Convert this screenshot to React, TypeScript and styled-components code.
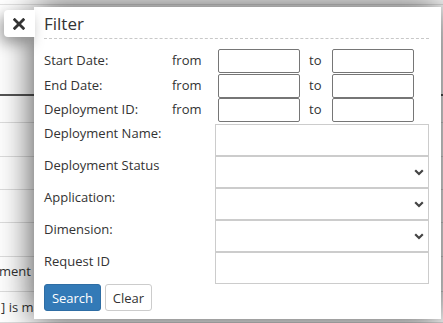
import React from "react";
import styled, { createGlobalStyle } from "styled-components";

const Global = createGlobalStyle`
  html, body { margin: 0; padding: 0; background: #fff; }
  body { font-family: "Open Sans", "Liberation Sans", sans-serif; color: #333; }
  * { box-sizing: border-box; }
`;

const Stage = styled.div`
  position: relative;
  width: 443px;
  height: 323px;
  overflow: hidden;
  background: #fff;
`;

/* ---------- background page ---------- */
const BgPage = styled.div`
  display: flex;
  flex-direction: column;
  width: 443px;
  font-size: 13px;
  color: #333;
`;

const BgTop = styled.div`
  height: 7px;
  border-bottom: 1px solid #e3e3e3;
  margin-top: -2px;
`;

const BgHeader = styled.div`
  height: 91px;
  border-bottom: 2px solid #555;
`;

const BgRow = styled.div<{ $h: number }>`
  height: ${(p) => p.$h}px;
  border-bottom: 1px solid #ddd;
  display: flex;
  align-items: center;
  white-space: nowrap;
`;

const BgText = styled.span<{ $shift: number }>`
  margin-left: ${(p) => p.$shift}px;
  margin-top: ${(p) => (p.$shift < 0 ? -6 : 0)}px;
`;

/* ---------- overlay panel ---------- */
const Panel = styled.div`
  position: absolute;
  left: 34px;
  top: 7px;
  width: 407px;
  height: 312px;
  background: #fff;
  box-shadow: 0 0 34px rgba(0, 0, 0, 0.75);
  padding: 0 12px 0 10px;
  display: flex;
  flex-direction: column;
`;

const CloseTab = styled.button`
  position: absolute;
  left: 4px;
  top: 10px;
  width: 31px;
  height: 27px;
  border: 0;
  padding: 0 1px 0 0;
  background: #fff;
  border-radius: 4px 0 0 4px;
  box-shadow: -4px 6px 14px rgba(0, 0, 0, 0.35);
  display: flex;
  align-items: center;
  justify-content: center;
  cursor: pointer;
`;

const Title = styled.div`
  height: 32px;
  display: flex;
  align-items: center;
  font-size: 17px;
  color: #333;
  border-bottom: 1px dashed #c8c8c8;
  padding-top: 1px;
`;

const RangeGrid = styled.div`
  display: grid;
  grid-template-columns: 128px 46px 82px 32px 83px;
  grid-auto-rows: 24.5px;
  margin-top: 10px;
  font-size: 13px;
  align-items: center;
`;

const Label = styled.span`
  font-size: 13px;
  color: #333;
  line-height: 18px;
  white-space: nowrap;
  margin-top: -2px;
`;

const Small = styled.span<{ $pl?: number }>`
  font-size: 13px;
  color: #333;
  padding-left: ${(p) => p.$pl ?? 0}px;
  margin-top: -2px;
`;

const RangeInput = styled.input`
  width: 82px;
  height: 24px;
  border: 1px solid #767676;
  border-radius: 2px;
  padding: 0 3px;
  font: inherit;
  align-self: start;
`;

const FieldGrid = styled.div`
  display: grid;
  grid-template-columns: 171px 214px;
  grid-auto-rows: 32px;
  margin-top: 1.5px;
`;

const FieldLabel = styled.span`
  font-size: 13px;
  color: #333;
  line-height: 18px;
  white-space: nowrap;
`;

const TextBox = styled.input`
  width: 214px;
  height: 32px;
  border: 1px solid #ccc;
  border-radius: 0;
  padding: 0 6px;
  font: inherit;
`;

const SelectBox = styled.div`
  width: 214px;
  height: 32px;
  border: 1px solid #ccc;
  display: flex;
  align-items: center;
  justify-content: flex-end;
  padding-right: 4px;
  padding-top: 1px;
`;

const Buttons = styled.div`
  display: flex;
  gap: 4px;
  margin-top: 0;
`;

const Btn = styled.button<{ $primary?: boolean }>`
  height: 27px;
  padding: 0 6px;
  font-family: "Open Sans", "Liberation Sans", sans-serif;
  font-size: 13px;
  border-radius: 3px;
  border: 1px solid ${(p) => (p.$primary ? "#2e6da4" : "#ccc")};
  background: ${(p) => (p.$primary ? "#337ab7" : "#fff")};
  color: ${(p) => (p.$primary ? "#fff" : "#333")};
  width: ${(p) => (p.$primary ? 57 : 47)}px;
  cursor: pointer;
`;

const Chevron = () => (
  <svg width="10" height="7" viewBox="0 0 10 7">
    <path d="M1.2 1.3 L5 5 L8.8 1.3" fill="none" stroke="#444" strokeWidth="2.2" />
  </svg>
);

const CloseIcon = () => (
  <svg width="12" height="12" viewBox="0 0 12 12">
    <path d="M1.7 1.7 L10.3 10.3 M10.3 1.7 L1.7 10.3" stroke="#333" strokeWidth="2.8" strokeLinecap="square" />
  </svg>
);

const rangeRows = ["Start Date:", "End Date:", "Deployment ID:"];

export default function App() {
  return (
    <Stage>
      <Global />
      <BgPage>
        <BgTop />
        <BgHeader />
        <BgRow $h={27} />
        <BgRow $h={34} />
        <BgRow $h={33} />
        <BgRow $h={33} />
        <BgRow $h={34} />
        <BgRow $h={35}>
          <BgText $shift={-1}>ment</BgText>
        </BgRow>
        <BgRow $h={31}>
          <BgText $shift={1}>] is made</BgText>
        </BgRow>
      </BgPage>

      <Panel>
        <Title>Filter</Title>
        <RangeGrid>
          {rangeRows.map((r) => (
            <React.Fragment key={r}>
              <Label>{r}</Label>
              <Small>from</Small>
              <RangeInput />
              <Small $pl={9}>to</Small>
              <RangeInput />
            </React.Fragment>
          ))}
        </RangeGrid>
        <FieldGrid>
          <FieldLabel>Deployment Name:</FieldLabel>
          <TextBox />
          <FieldLabel>Deployment Status</FieldLabel>
          <SelectBox><Chevron /></SelectBox>
          <FieldLabel>Application:</FieldLabel>
          <SelectBox><Chevron /></SelectBox>
          <FieldLabel>Dimension:</FieldLabel>
          <SelectBox><Chevron /></SelectBox>
          <FieldLabel>Request ID</FieldLabel>
          <TextBox />
        </FieldGrid>
        <Buttons>
          <Btn $primary>Search</Btn>
          <Btn>Clear</Btn>
        </Buttons>
      </Panel>
      <CloseTab aria-label="close"><CloseIcon /></CloseTab>
    </Stage>
  );
}
